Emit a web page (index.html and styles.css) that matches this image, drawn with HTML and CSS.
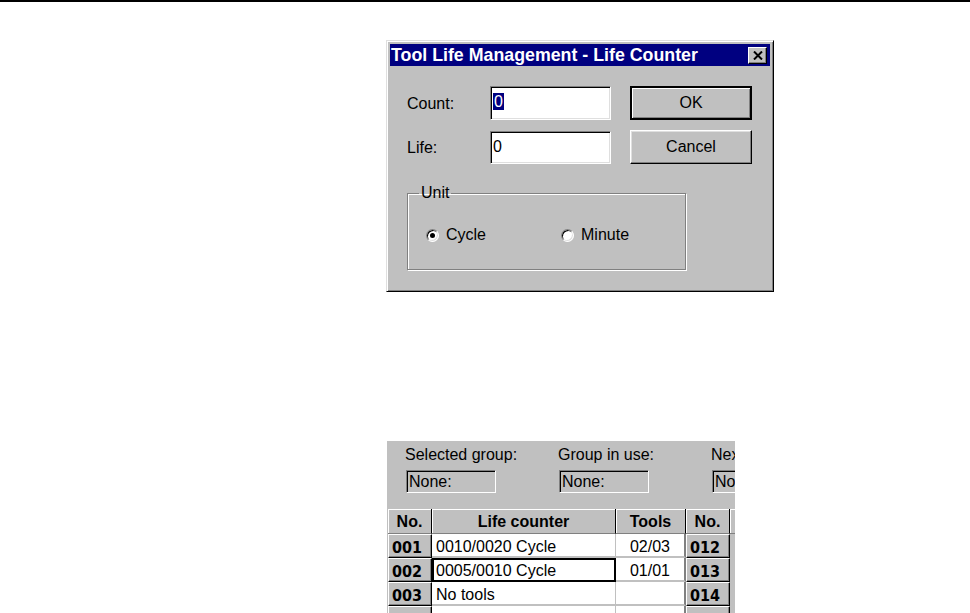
FILE: index.html
```html
<!DOCTYPE html>
<html lang="en">

<head>
    <meta charset="UTF-8">
    <title>Tool Life Management</title>
    <link rel="stylesheet" href="styles.css">
</head>

<body>
    <div class="rule"></div>

    <div class="dialog">
        <div class="titlebar">
            <span class="title">Tool Life Management - Life Counter</span>
            <span class="close">
                <svg width="10" height="9" viewBox="0 0 10 9">
                    <path d="M1 0.5 L9 8.5 M9 0.5 L1 8.5" stroke="#000" stroke-width="2" />
                </svg>
            </span>
        </div>
        <div class="dlg-body">
            <div class="row">
                <span class="lbl">Count:</span>
                <div class="field"><span class="sel">0</span></div>
                <div class="btn btn-default">OK</div>
            </div>
            <div class="row row-life">
                <span class="lbl">Life:</span>
                <div class="field">0</div>
                <div class="btn">Cancel</div>
            </div>
            <fieldset class="group">
                <legend>Unit</legend>
                <div class="radios">
                    <span class="radio"><span class="dot checked"></span>Cycle</span>
                    <span class="radio"><span class="dot"></span>Minute</span>
                </div>
            </fieldset>
        </div>
    </div>

    <div class="panel">
        <div class="status">
            <div class="stat">
                <p>Selected group:</p>
                <div class="statbox">None:</div>
            </div>
            <div class="stat">
                <p>Group in use:</p>
                <div class="statbox">None:</div>
            </div>
            <div class="stat">
                <p>Next group:</p>
                <div class="statbox">None:</div>
            </div>
        </div>
        <table class="groups">
            <colgroup>
                <col class="c-no">
                <col class="c-life">
                <col class="c-tools">
                <col class="c-no">
                <col class="c-rest">
            </colgroup>
            <tr>
                <th>No.</th>
                <th>Life counter</th>
                <th>Tools</th>
                <th>No.</th>
                <th></th>
            </tr>
            <tr>
                <td class="no">001</td>
                <td class="life">0010/0020 Cycle</td>
                <td class="tools">02/03</td>
                <td class="no">012</td>
                <td></td>
            </tr>
            <tr>
                <td class="no">002</td>
                <td class="life focus">0005/0010 Cycle</td>
                <td class="tools">01/01</td>
                <td class="no">013</td>
                <td></td>
            </tr>
            <tr>
                <td class="no">003</td>
                <td class="life">No tools</td>
                <td class="tools"></td>
                <td class="no">014</td>
                <td></td>
            </tr>
            <tr>
                <td class="no"></td>
                <td class="life"></td>
                <td class="tools"></td>
                <td class="no"></td>
                <td></td>
            </tr>
        </table>
    </div>
</body>

</html>
```

FILE: styles.css
```css
* {
    padding: 0;
    margin: 0;
    box-sizing: border-box;
}

html,
body {
    background-color: #fff;
    overflow: hidden;
}

body {
    font-family: "Liberation Sans", Arial, sans-serif;
    font-size: 16px;
    color: #000;
}

.rule {
    height: 2px;
    background-color: #000;
}

/* dialog window */

.dialog {
    margin: 38px 0 0 386px;
    width: 388px;
    height: 252px;
    padding: 3px;
    background-color: #c0c0c0;
    border: 1px solid;
    border-color: #dfdfdf #000 #000 #dfdfdf;
    box-shadow: inset 1px 1px 0 #fff, inset -1px -1px 0 #808080;
}

.titlebar {
    height: 22px;
    background-color: #000080;
    color: #fff;
    display: flex;
    align-items: center;
    justify-content: space-between;
    padding-left: 1px;
}

.title {
    font-weight: bold;
    font-size: 17.8px;
    white-space: nowrap;
}

.close {
    width: 19px;
    height: 17px;
    margin-right: 3px;
    background-color: #c0c0c0;
    border: 1px solid;
    border-color: #fff #000 #000 #fff;
    box-shadow: inset -1px -1px 0 #808080;
    display: flex;
    align-items: center;
    justify-content: center;
}

.dlg-body {
    padding: 20px 0 0 17px;
}

.row {
    display: flex;
    align-items: center;
}

.row-life {
    margin-top: 10px;
}

.lbl {
    width: 83px;
    padding-top: 1px;
}

.field {
    width: 121px;
    height: 34px;
    background-color: #fff;
    border: 1px solid;
    border-color: #808080 #fff #fff #808080;
    box-shadow: inset 1px 1px 0 #000, inset -1px -1px 0 #dfdfdf;
    padding: 6px 0 0 2px;
    line-height: 18px;
}

.row-life .field {
    height: 33px;
}

.sel {
    background-color: #000080;
    color: #fff;
    padding: 0 1px;
}

.btn {
    width: 122px;
    height: 34px;
    margin-left: 19px;
    background-color: #c0c0c0;
    border: 1px solid;
    border-color: #fff #000 #000 #fff;
    box-shadow: inset -1px -1px 0 #808080, inset 1px 1px 0 #dfdfdf;
    display: flex;
    align-items: center;
    justify-content: center;
}

.btn-default {
    border: 2px solid #000;
    box-shadow: inset 1px 1px 0 #fff, inset -1px -1px 0 #808080;
}

/* Unit group box */

.group {
    margin-top: 20px;
    width: 279px;
    height: 86px;
    border: 1px solid #808080;
    box-shadow: inset 1px 1px 0 #fff, 1px 1px 0 #fff;
    padding: 0 0 0 11px;
}

.group legend {
    padding: 0 2px;
    line-height: 18px;
}

.radios {
    display: flex;
    margin: 24px 0 0 7px;
}

.radio {
    display: flex;
    align-items: center;
    gap: 7px;
    line-height: 18px;
}

.radio:first-child {
    width: 135px;
}

.dot {
    width: 13px;
    height: 13px;
    border-radius: 50%;
    background-color: #fff;
    border: 1px solid;
    border-color: #808080 #fff #fff #808080;
    box-shadow: inset 1px 1px 0 #000, inset -1px -1px 0 #dfdfdf;
    display: flex;
    align-items: center;
    justify-content: center;
}

.dot.checked::after {
    content: "";
    width: 5px;
    height: 5px;
    border-radius: 50%;
    background-color: #000;
}

/* tool group panel */

.panel {
    margin: 149px 0 0 387px;
    width: 348px;
    height: 172px;
    background-color: #c0c0c0;
    overflow: hidden;
    padding-top: 5px;
}

.status {
    display: flex;
    padding-left: 18px;
}

.stat {
    flex: 0 0 153px;
}

.stat p {
    line-height: 18px;
    white-space: nowrap;
}

.statbox {
    margin: 6px 0 0 1px;
    width: 90px;
    height: 23px;
    border: 1px solid;
    border-color: #808080 #fff #fff #808080;
    box-shadow: inset 1px 1px 0 #000;
    padding: 2px 0 0 2px;
    line-height: 18px;
}

.groups {
    margin: 16px 0 0 1px;
    table-layout: fixed;
    width: 400px;
    border-collapse: separate;
    border-spacing: 0;
}

.c-no {
    width: 44px;
}

.c-life {
    width: 184px;
}

.c-tools {
    width: 70px;
}

.c-rest {
    width: 58px;
}

.groups th {
    height: 25px;
    font-weight: bold;
    background-color: #c0c0c0;
    border-right: 1px solid #000;
    border-bottom: 1px solid #808080;
    box-shadow: inset 1px 1px 0 #fff;
    white-space: nowrap;
    padding-top: 2px;
}

.groups td {
    height: 24px;
    background-color: #fff;
    border-right: 1px solid #c0c0c0;
    border-bottom: 2px solid #c0c0c0;
    white-space: nowrap;
    line-height: 18px;
    padding-top: 3px;
}

.groups td.no {
    background-color: #c0c0c0;
    border: 1px solid;
    border-color: #fff #000 #000 #fff;
    box-shadow: inset -1px -1px 0 #808080;
    font-family: "DejaVu Sans Condensed", sans-serif;
    font-weight: bold;
    font-size: 16px;
    padding-left: 3px;
}

.groups td.life {
    padding-left: 4px;
}

.groups td.focus {
    outline: 2px solid #000;
    outline-offset: -2px;
}

.groups td.tools {
    text-align: center;
    border-right: 2px solid #808080;
}

.groups td:last-child {
    background-color: #c0c0c0;
}
```
